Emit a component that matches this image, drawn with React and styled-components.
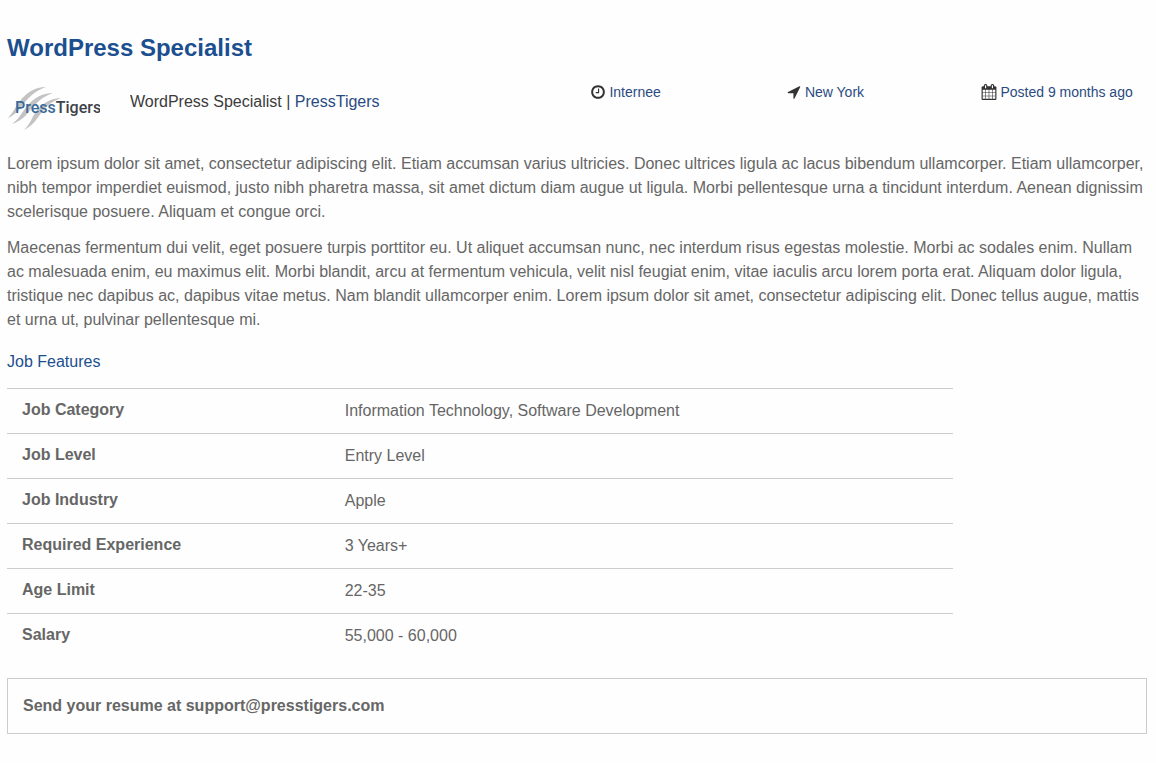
import React from 'react';
import styled, { createGlobalStyle } from 'styled-components';

const GlobalStyle = createGlobalStyle`
  body {
    margin: 0;
    background: #fefefe;
    color: #666;
    font-family: "Liberation Sans", Arial, sans-serif;
    font-size: 16px;
    line-height: 24px;
  }
`;

const Page = styled.main`
  padding: 32px 9px 28px 7px;
`;

const Title = styled.h1`
  margin: 0 0 20px;
  color: #1b4f8f;
  font-size: 24px;
  line-height: 32px;
`;

const Header = styled.header`
  display: flex;
  align-items: flex-start;
  height: 48px;
  margin-bottom: 20px;
`;

const Logo = styled.svg`
  flex: none;
  width: 93px;
  height: 48px;
  margin-right: 30px;
`;

const Company = styled.div`
  flex: 1;
  padding-top: 6px;
  color: #3b3b3b;
`;

const Link = styled.a`
  color: #2a4b82;
  text-decoration: none;
`;

const MetaList = styled.ul`
  display: grid;
  grid-template-columns: 35% 35% 30%;
  width: 49%;
  margin: 0;
  padding: 0;
  list-style: none;
`;

const MetaItem = styled.li`
  display: flex;
  align-items: center;
  gap: 3px;
  height: 16px;
  padding-left: 2px;
  color: #2a4b82;
  font-size: 14px;
  white-space: nowrap;
`;

const Icon = styled.svg`
  flex: none;
  width: 16px;
  height: 16px;
  fill: #333;
`;

const Paragraph = styled.p`
  margin: 0 0 12px;
`;

const SectionTitle = styled.h2`
  margin: 18px 0 14px;
  color: #1b4f8f;
  font-size: 16px;
  font-weight: normal;
`;

const FeatureTable = styled.table`
  width: 83%;
  margin-bottom: 20px;
  border-collapse: collapse;
  table-layout: fixed;
`;

const FeatureRow = styled.tr`
  border-top: 1px solid #ccc;
`;

const FeatureName = styled.th`
  width: 34%;
  box-sizing: border-box;
  padding: 9px 15px 11px;
  text-align: left;
`;

const FeatureValue = styled.td`
  padding: 10px 16px;
`;

const ApplyBox = styled.div`
  padding: 15px;
  border: 1px solid #ccc;
  font-weight: bold;
`;

const icons = {
  clock: 'M1024 544v448q0 14-9 23t-23 9h-320q-14 0-23-9t-9-23v-64q0-14 9-23t23-9h224v-352q0-14 9-23t23-9h64q14 0 23 9t9 23zm416 352q0-148-73-273t-198-198-273-73-273 73-198 198-73 273 73 273 198 198 273 73 273-73 198-198 73-273zm224 0q0 209-103 385.5t-279.5 279.5-385.5 103-385.5-103-279.5-279.5-103-385.5 103-385.5 279.5-279.5 385.5-103 385.5 103 279.5 279.5 103 385.5z',
  arrow: 'M1593 349l-640 1280q-17 35-57 35-5 0-15-2-22-5-35.5-22.5t-13.5-39.5v-576h-576q-22 0-39.5-13.5t-22.5-35.5 4-42 29-30l1280-640q13-7 29-7 27 0 45 19 15 14 18.5 34.5t-6.5 39.5z',
  calendar: 'M192 1664h288v-288h-288v288zm352 0h320v-288h-320v288zm-352-352h288v-320h-288v320zm352 0h320v-320h-320v320zm-352-384h288v-288h-288v288zm736 736h320v-288h-320v288zm-384-736h320v-288h-320v288zm768 736h288v-288h-288v288zm-384-352h320v-320h-320v320zm-352-864v-288q0-13-9.5-22.5t-22.5-9.5h-64q-13 0-22.5 9.5t-9.5 22.5v288q0 13 9.5 22.5t22.5 9.5h64q13 0 22.5-9.5t9.5-22.5zm736 864h288v-320h-288v320zm-384-384h320v-288h-320v288zm384 0h288v-288h-288v288zm32-480v-288q0-13-9.5-22.5t-22.5-9.5h-64q-13 0-22.5 9.5t-9.5 22.5v288q0 13 9.5 22.5t22.5 9.5h64q13 0 22.5-9.5t9.5-22.5zm384-64v1280q0 52-38 90t-90 38h-1408q-52 0-90-38t-38-90v-1280q0-52 38-90t90-38h128v-96q0-66 47-113t113-47h64q66 0 113 47t47 113v96h384v-96q0-66 47-113t113-47h64q66 0 113 47t47 113v96h128q52 0 90 38t38 90z',
};

const meta = [
  { icon: 'clock', text: 'Internee' },
  { icon: 'arrow', text: 'New York' },
  { icon: 'calendar', text: 'Posted 9 months ago' },
];

const features = [
  { name: 'Job Category', value: 'Information Technology, Software Development' },
  { name: 'Job Level', value: 'Entry Level' },
  { name: 'Job Industry', value: 'Apple' },
  { name: 'Required Experience', value: '3 Years+' },
  { name: 'Age Limit', value: '22-35' },
  { name: 'Salary', value: '55,000 - 60,000' },
];

const CompanyLogo = () => (
  <Logo viewBox="0 0 93 48" role="img" aria-label="PressTigers">
    <g fill="#c3c3c5">
      <path d="M39 3C28 3 19 9 13 17C8 23 6 29 1 34C9 31 13 24 18 18C24 11 30 6 39 3Z" />
      <path d="M46 9C35 9 27 14 21 21C15 28 12 35 5 40C15 37 20 30 25 24C31 17 37 12 46 9Z" />
      <path d="M54 14C44 14 36 19 30 26C25 33 24 39 17 46C27 41 30 34 35 28C40 21 46 17 54 14Z" />
    </g>
    <text x="8" y="29" fontFamily="Roboto, sans-serif" fontSize="16" fontWeight="500" fill="#3a6a99" stroke="none">
      Press<tspan fill="#3d4248">Tigers</tspan>
    </text>
  </Logo>
);

const App = () => {
  return (
    <Page>
      <GlobalStyle />
      <Title>WordPress Specialist</Title>
      <Header>
        <CompanyLogo />
        <Company>
          WordPress Specialist | <Link href="#company">PressTigers</Link>
        </Company>
        <MetaList>
          {meta.map((item) => (
            <MetaItem key={item.text}>
              <Icon viewBox="0 0 1792 1792" aria-hidden="true">
                <path d={icons[item.icon]} />
              </Icon>
              {item.text}
            </MetaItem>
          ))}
        </MetaList>
      </Header>
      <Paragraph>
        Lorem ipsum dolor sit amet, consectetur adipiscing elit. Etiam accumsan varius ultricies. Donec ultrices ligula ac lacus bibendum ullamcorper. Etiam ullamcorper, nibh tempor imperdiet euismod, justo nibh pharetra massa, sit amet dictum diam augue ut ligula. Morbi pellentesque urna a tincidunt interdum. Aenean dignissim scelerisque posuere. Aliquam et congue orci.
      </Paragraph>
      <Paragraph>
        Maecenas fermentum dui velit, eget posuere turpis porttitor eu. Ut aliquet accumsan nunc, nec interdum risus egestas molestie. Morbi ac sodales enim. Nullam ac malesuada enim, eu maximus elit. Morbi blandit, arcu at fermentum vehicula, velit nisl feugiat enim, vitae iaculis arcu lorem porta erat. Aliquam dolor ligula, tristique nec dapibus ac, dapibus vitae metus. Nam blandit ullamcorper enim. Lorem ipsum dolor sit amet, consectetur adipiscing elit. Donec tellus augue, mattis et urna ut, pulvinar pellentesque mi.
      </Paragraph>
      <SectionTitle>Job Features</SectionTitle>
      <FeatureTable>
        <tbody>
          {features.map((feature) => (
            <FeatureRow key={feature.name}>
              <FeatureName scope="row">{feature.name}</FeatureName>
              <FeatureValue>{feature.value}</FeatureValue>
            </FeatureRow>
          ))}
        </tbody>
      </FeatureTable>
      <ApplyBox>Send your resume at support@presstigers.com</ApplyBox>
    </Page>
  );
};

export default App;
